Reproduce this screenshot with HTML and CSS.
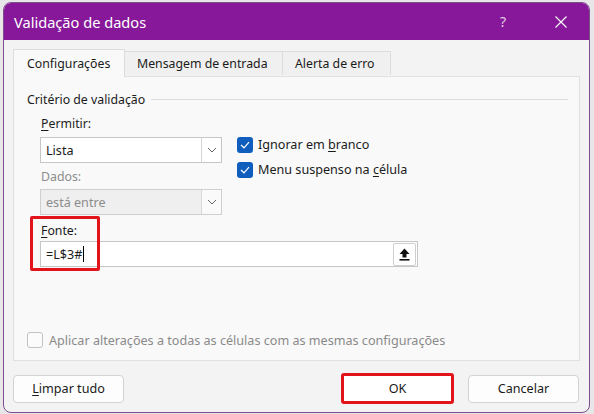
FILE: index.html
```html
<!DOCTYPE html>
<html lang="pt">
<head>
<meta charset="utf-8">
<title>Validação de dados</title>
<link rel="stylesheet" href="styles.css">
</head>
<body>
<div class="dialog">
  <div class="titlebar">
    <span class="title">Validação de dados</span>
    <div class="tb-controls">
      <span class="help">?</span>
      <svg class="close" width="14" height="14" viewBox="0 0 14 14"><path d="M1.5 1.5 L12.5 12.5 M12.5 1.5 L1.5 12.5" stroke="#fff" stroke-width="1.1" fill="none"/></svg>
    </div>
  </div>
  <div class="body">
    <div class="tabs">
      <div class="tab active">Configurações</div>
      <div class="tab">Mensagem de entrada</div>
      <div class="tab">Alerta de erro</div>
    </div>
    <div class="panel">
      <div class="legend"><span>Critério de validação</span><span class="rule"></span></div>
      <div class="criteria">
        <div class="leftcol">
          <div class="label lbl-permitir"><u>P</u>ermitir:</div>
          <div class="select">
            <span class="sel-text">Lista</span>
            <span class="sel-btn"><svg width="10" height="6" viewBox="0 0 10 6"><path d="M1 1 L5 5 L9 1" stroke="#666" stroke-width="1" fill="none"/></svg></span>
          </div>
          <div class="label lbl-dados disabled">Dados:</div>
          <div class="select disabled-sel">
            <span class="sel-text">está entre</span>
            <span class="sel-btn"><svg width="10" height="6" viewBox="0 0 10 6"><path d="M1 1 L5 5 L9 1" stroke="#666" stroke-width="1" fill="none"/></svg></span>
          </div>
        </div>
        <div class="checks">
          <div class="check-row"><span class="cb checked"><svg width="10" height="8" viewBox="0 0 10 8"><path d="M1 4 L4 6.8 L9 1.2" stroke="#fff" stroke-width="1.2" fill="none"/></svg></span><span>Ignorar em <u>b</u>ranco</span></div>
          <div class="check-row"><span class="cb checked"><svg width="10" height="8" viewBox="0 0 10 8"><path d="M1 4 L4 6.8 L9 1.2" stroke="#fff" stroke-width="1.2" fill="none"/></svg></span><span>Menu suspenso na <u>c</u>élula</span></div>
        </div>
      </div>
      <div class="fonte">
        <div class="label lbl-fonte"><u>F</u>onte:</div>
        <div class="input">
          <span class="input-text">=L$3#<span class="caret"></span></span>
          <span class="upload"><svg width="11" height="13" viewBox="0 0 11 13"><path d="M5.5 0.5 L10.5 6 L7.5 6 L7.5 9.5 L3.5 9.5 L3.5 6 L0.5 6 Z" fill="#111"/><rect x="0.5" y="11" width="10" height="1.6" fill="#111"/></svg></span>
        </div>
        <div class="highlight"></div>
      </div>
      <div class="apply">
        <span class="cb empty"></span>
        <span>Aplicar alterações a todas as células com as mesmas configurações</span>
      </div>
    </div>
    <div class="buttons">
      <button class="btn btn-clear"><u>L</u>impar tudo</button>
      <div class="spacer"></div>
      <button class="btn btn-ok">OK</button>
      <button class="btn btn-cancel">Cancelar</button>
    </div>
  </div>
</div>
</body>
</html>
```
FILE: styles.css
```css
* { box-sizing: border-box; }
html, body { margin: 0; padding: 0; }
body {
  width: 594px;
  height: 414px;
  background: #e8e6e9;
  padding: 2px 4px 1px 3px;
  font-family: "Noto Sans", "Open Sans", sans-serif;
  font-size: 12.3px;
  color: #1b1b1b;
  overflow: hidden;
}
u { text-decoration: underline; text-underline-offset: 2px; text-decoration-thickness: 1px; }

.dialog {
  width: 587px;
  height: 411px;
  border-radius: 8px;
  border: 1px solid #7f4e8c;
  background: #f3f3f3;
  overflow: hidden;
  display: flex;
  flex-direction: column;
}
.titlebar {
  height: 37px;
  flex: none;
  background: #87189a;
  display: flex;
  align-items: center;
  padding-left: 10px;
  color: #fff;
}
.title { font-size: 14.6px; letter-spacing: 0; }
.tb-controls {
  margin-left: auto;
  display: flex;
  align-items: center;
  padding-right: 21px;
}
.help { font-size: 14px; color: #e4cfe9; margin-right: 48px; }
.close { display: block; }

.body {
  flex: 1;
  padding: 9px 9px 0 9px;
  display: flex;
  flex-direction: column;
}
.tabs {
  display: flex;
  align-items: flex-end;
  height: 27px;
  position: relative;
  z-index: 1;
}
.tab {
  height: 24px;
  padding: 0 12px 0 12px;
  border: 1px solid #dcdcdc;
  border-bottom: none;
  border-left: none;
  display: flex;
  align-items: center;
  background: #f0f0f0;
  margin-bottom: 1px;
}
.tab.active {
  height: 28px;
  width: 112px;
  padding-left: 13px;
  background: #f9f9f9;
  border-left: 1px solid #dcdcdc;
  margin-bottom: -1px;
  padding-bottom: 1px;
}
.tab:nth-child(2) { width: 158px; }
.tab:nth-child(3) { width: 108px; }

.panel {
  height: 285px;
  border: 1px solid #e0e0e0;
  background: #f9f9f9;
  padding: 13px 11px 11px 13px;
  display: flex;
  flex-direction: column;
}
.legend {
  height: 18px;
  display: flex;
  align-items: center;
}
.rule {
  flex: 1;
  height: 1px;
  background: #dcdcdc;
  margin-left: 6px;
  margin-top: 1px;
}
.criteria {
  display: flex;
  padding-left: 13px;
}
.leftcol { width: 182px; }
.label { height: 18px; line-height: 18px; padding-left: 1px; }
.label.disabled { color: #8c8c8c; }
.lbl-permitir { margin-top: 7px; margin-bottom: 4px; }
.lbl-dados { margin-top: 5px; margin-bottom: 3px; }
.select {
  height: 26px;
  border: 1px solid #c6c6c6;
  background: #fff;
  display: flex;
  align-items: stretch;
}
.sel-text {
  flex: 1;
  padding-left: 5px;
  display: flex;
  align-items: center;
  font-size: 12.6px;
}
.sel-btn {
  width: 20px;
  border-left: 1px solid #d6d6d6;
  display: flex;
  align-items: center;
  justify-content: center;
  background: #fff;
}
.disabled-sel { background: #efefef; border-color: #cfcfcf; }
.disabled-sel .sel-text { color: #8c8c8c; }
.disabled-sel .sel-btn { background: #fafafa; border-left-color: #d8d8d8; }

.checks {
  margin-left: 15px;
  margin-top: 29px;
}
.check-row {
  height: 25px;
  display: flex;
  align-items: flex-start;
}
.check-row span:last-child { line-height: 16px; margin-left: 5px; font-size: 12.6px; }
.cb {
  width: 16px;
  height: 16px;
  border-radius: 3px;
  flex: none;
  display: flex;
  align-items: center;
  justify-content: center;
}
.cb.checked { background: #0f5ebd; }
.cb.empty { border: 1px solid #c2c2c2; background: #fbfbfb; }

.fonte {
  position: relative;
  padding-left: 13px;
}
.lbl-fonte { margin-top: 7px; margin-bottom: 1px; }
.input {
  width: 378px;
  height: 26px;
  border: 1px solid #c6c6c6;
  background: #fff;
  display: flex;
  align-items: center;
  padding-right: 1px;
}
.input-text {
  flex: 1;
  padding-left: 5px;
  font-size: 12.6px;
  display: flex;
  align-items: center;
}
.caret {
  display: inline-block;
  width: 1px;
  height: 16px;
  background: #000;
  margin-left: 1px;
}
.upload {
  width: 23px;
  height: 23px;
  border: 1px solid #cfcfcf;
  border-radius: 2px;
  background: #fff;
  display: flex;
  align-items: center;
  justify-content: center;
}
.highlight {
  position: absolute;
  left: 3px;
  top: 1px;
  width: 70px;
  height: 55px;
  border: 3px solid #e3131b;
  border-radius: 2px;
}

.apply {
  margin-top: auto;
  height: 18px;
  display: flex;
  align-items: center;
  color: #8a8a8a;
  font-size: 12.6px;
}
.apply span:last-child { margin-left: 6px; }

.buttons {
  display: flex;
  align-items: center;
  margin-top: 12px;
  padding-right: 1px;
}
.spacer { flex: 1; }
.btn {
  font-family: inherit;
  font-size: 12.6px;
  color: #1b1b1b;
  background: #fdfdfd;
  border: 1px solid #d2d2d2;
  border-radius: 4px;
  height: 28px;
  padding: 0;
}
.btn-clear { width: 111px; }
.btn-ok {
  width: 113px;
  height: 31px;
  border: 3px solid #e3131b;
  border-radius: 3px;
  background: #fff;
}
.btn-cancel { width: 111px; margin-left: 14px; }
```
